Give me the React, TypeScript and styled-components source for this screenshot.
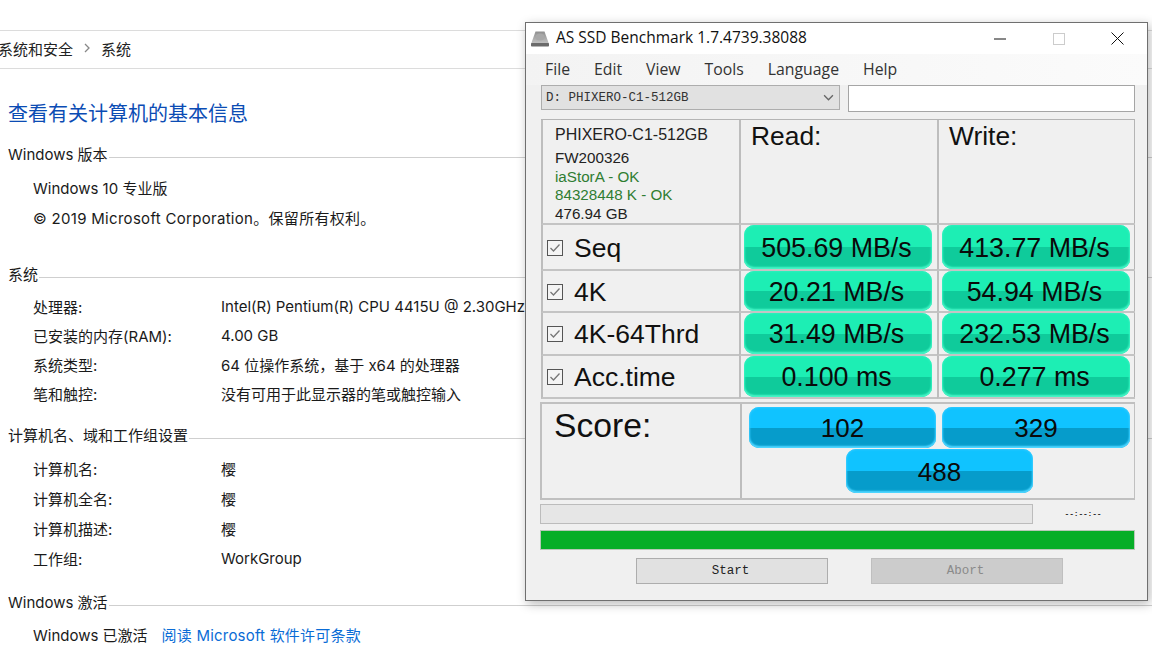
import React from 'react';
import styled, { createGlobalStyle } from 'styled-components';

const Global = createGlobalStyle`
  html, body { margin: 0; padding: 0; background: #fff; overflow: hidden; }
  body { width: 1152px; height: 646px; }
  * { box-sizing: border-box; }
`;

const pageFont = `Inter, "Noto Sans CJK SC", sans-serif`;
const uiFont = `"Open Sans", "Noto Sans CJK SC", sans-serif`;
const cellFont = `"Liberation Sans", Arial, sans-serif`;
const monoFont = `"Liberation Mono", "Courier New", monospace`;

const Page = styled.div`
  position: relative;
  width: 1152px;
  height: 646px;
  overflow: hidden;
  padding-top: 30px;
  font-family: ${pageFont};
  font-size: 15px;
  color: #1a1a1a;
`;

const Breadcrumb = styled.div`
  height: 39px;
  padding-bottom: 3px;
  border-top: 1px solid #dcdcdc;
  border-bottom: 1px solid #dcdcdc;
  display: flex;
  align-items: center;
  gap: 10px;
  margin-left: -2px;
  color: #222;
`;

const Title = styled.h1`
  margin: 30px 0 0 8px;
  height: 30px;
  line-height: 30px;
  font-size: 20px;
  font-weight: 400;
  color: #0b4cb4;
`;

const Section = styled.section<{ $top: number }>`
  margin-top: ${(p) => p.$top}px;
`;

const SectionHead = styled.div`
  display: flex;
  align-items: center;
  gap: 1px;
  margin: 0 0 8px 8px;
  height: 22px;
  white-space: nowrap;
  &::after {
    content: '';
    flex: 1;
    height: 1px;
    margin-top: 9px;
    background: #cfcfcf;
  }
`;

const InfoRow = styled.div<{ $h: number }>`
  display: flex;
  height: ${(p) => p.$h}px;
  align-items: center;
  padding-left: 33px;
  white-space: nowrap;
`;

const CopyrightRow = styled(InfoRow)`
  letter-spacing: 0.3px;
`;

const InfoLabel = styled.span`
  width: 188px;
  flex: none;
`;

const LinkText = styled.span`
  color: #0a6cd6;
  margin-left: 14px;
  letter-spacing: 0.2px;
`;

const Win = styled.div`
  position: absolute;
  left: 525px;
  top: 22px;
  width: 623px;
  height: 579px;
  background: #f0f0f0;
  border: 1px solid #6f6f6f;
  box-shadow: 2px 3px 10px rgba(0, 0, 0, 0.28);
  display: flex;
  flex-direction: column;
  font-family: ${uiFont};
`;

const TitleBar = styled.div`
  height: 31px;
  background: #fff;
  display: flex;
  align-items: center;
  padding-left: 4px;
  font-size: 15.500px;
  color: #111;
  flex: none;
`;

const TitleText = styled.span`
  flex: 1;
  margin: 0 0 3px 6px;
`;

const CaptionButton = styled.div`
  width: 59px;
  height: 31px;
  display: flex;
  align-items: center;
  justify-content: center;
`;

const MenuBar = styled.div`
  height: 31px;
  flex: none;
  display: flex;
  align-items: center;
  padding: 0 0 2px 19px;
  gap: 24px;
  font-size: 15.800px;
  color: #333;
  background: linear-gradient(90deg, #f3f3f3, #fbfbfb);
`;

const Body = styled.div`
  padding: 0 12px 0 14px;
  flex: 1;
`;

const DriveRow = styled.div`
  display: flex;
  gap: 8px;
  height: 27px;
  padding-left: 1px;
`;

const DriveSelect = styled.div`
  width: 299px;
  height: 25px;
  background: #e1e1e1;
  border: 1px solid #adadad;
  display: flex;
  align-items: center;
  justify-content: space-between;
  padding: 0 5px 0 4px;
  font-family: ${monoFont};
  font-size: 12.500px;
  color: #333;
`;

const DriveInput = styled.div`
  width: 288px;
  height: 27px;
  background: #fff;
  border: 1px solid #a5a5a5;
`;

const ResultGrid = styled.div`
  margin: 7px 0 0 1px;
  width: 594px;
  display: grid;
  grid-template-columns: 198px 198px 198px;
  grid-template-rows: 105px 46px 42px 43px 43px;
  border-top: 1px solid #b4b4b4;
  border-right: 1px solid #b4b4b4;
`;

const Cell = styled.div`
  border-left: 2px solid #bdbdbd;
  border-bottom: 2px solid #c4c4c4;
  min-width: 0;
  display: flex;
`;

const InfoCell = styled(Cell)`
  flex-direction: column;
  padding: 5px 0 0 12px;
  font-family: ${cellFont};
  font-size: 15.200px;
  line-height: 18.500px;
  color: #222;
  white-space: nowrap;
`;

const DriveName = styled.div`
  font-size: 16px;
  line-height: 20px;
  margin-bottom: 4px;
`;

const StatusLine = styled.div`
  color: #2f7d32;
`;

const HeadCell = styled(Cell)`
  font-family: ${cellFont};
  font-size: 26.400px;
  color: #111;
  padding: 1px 0 0 10px;
`;

const TestCell = styled(Cell)`
  align-items: center;
  padding: 2px 0 0 4px;
  gap: 10px;
  font-family: ${cellFont};
  font-size: 26.500px;
  color: #111;
  white-space: nowrap;
`;

const ValueCell = styled(Cell)`
  padding: 0 0 0 3px;
  align-items: stretch;
`;

const Pill = styled.div<{ $tone: 'green' | 'blue' }>`
  width: 188px;
  border-radius: 10px;
  display: flex;
  align-items: center;
  justify-content: center;
  padding: 2px 3px 0 0;
  font-family: ${cellFont};
  font-size: 26.800px;
  color: #0a0a0a;
  white-space: nowrap;
  box-shadow: inset 0 -2px 2px ${(p) => (p.$tone === 'green' ? '#46f5c6' : '#4fd6ff')},
    inset 0 0 2px 1px ${(p) => (p.$tone === 'green' ? '#2cf0bd' : '#2fc8ff')};
  background: ${(p) =>
    p.$tone === 'green'
      ? 'linear-gradient(#1deeb4 0 50%, #0fcb9b 50% 100%)'
      : 'linear-gradient(#10c3ff 0 50%, #069ccb 50% 100%)'};
`;

const ScoreBox = styled.div`
  margin-top: 3px;
  width: 595px;
  height: 98px;
  border: 2px solid #c0c0c0;
  border-right-width: 1px;
  display: grid;
  grid-template-columns: 200px 1fr;
`;

const ScoreLabel = styled.div`
  border-right: 2px solid #bdbdbd;
  font-family: ${cellFont};
  font-size: 33.700px;
  padding: 2px 0 0 12px;
  color: #111;
`;

const ScorePills = styled.div`
  display: grid;
  grid-template-columns: 187px 188px;
  grid-auto-rows: 42px;
  column-gap: 6px;
  padding: 3px 0 0 7px;
`;

const ScorePill = styled(Pill)`
  width: auto;
  height: 41px;
  padding: 2px 0 0 0;
  font-size: 26px;
`;

const TotalPill = styled(ScorePill)`
  grid-column: 1 / 3;
  justify-self: center;
  width: 187px;
  height: 44px;
`;

const ProgressRow = styled.div`
  display: flex;
  align-items: center;
  margin-top: 3px;
  height: 21px;
`;

const Track = styled.div`
  width: 493px;
  height: 20px;
  background: #e6e6e6;
  border: 1px solid #bcbcbc;
`;

const Timer = styled.div`
  width: 100px;
  text-align: center;
  font-family: ${monoFont};
  font-size: 8px;
  letter-spacing: -0.200px;
  font-weight: 700;
  color: #222;
`;

const DoneBar = styled.div`
  margin-top: 6px;
  width: 595px;
  height: 20px;
  background: #06ae27;
  border: 1px solid #b8c8b8;
`;

const ButtonRow = styled.div`
  display: flex;
  gap: 43px;
  margin: 8px 0 0 96px;
`;

const ActionButton = styled.div<{ $disabled?: boolean }>`
  width: 192px;
  height: 26px;
  display: flex;
  align-items: center;
  justify-content: center;
  padding-right: 3px;
  font-family: ${monoFont};
  font-size: 12.500px;
  background: ${(p) => (p.$disabled ? '#cccccc' : '#e1e1e1')};
  border: 1px solid ${(p) => (p.$disabled ? '#bfbfbf' : '#adadad')};
  color: ${(p) => (p.$disabled ? '#8a8a8a' : '#222')};
`;

const DriveIcon = () => (
  <svg width="20" height="18" viewBox="0 0 20 18">
    <defs>
      <linearGradient id="driveTop" x1="0" y1="0" x2="0" y2="1">
        <stop offset="0" stopColor="#8f8f8f" />
        <stop offset="1" stopColor="#c4c4c4" />
      </linearGradient>
    </defs>
    <path d="M5.500 1.500h9l4.500 12.500h-18z" fill="url(#driveTop)" />
    <ellipse cx="10" cy="7" rx="4.500" ry="3.500" fill="#a8a8a8" />
    <rect x="1" y="13" width="18" height="3.500" rx="0.800" fill="#6a6a6a" />
  </svg>
);

const Check = () => (
  <svg width="17" height="17" viewBox="0 0 17 17">
    <rect x="0.500" y="0.500" width="15" height="15" fill="#f4f4f4" stroke="#555" />
    <path d="M3.500 8l3 3 6-6.500" fill="none" stroke="#777" strokeWidth="1.300" />
  </svg>
);

const Chevron = ({ size, color }: { size: number; color: string }) => (
  <svg width={size} height={size} viewBox="0 0 10 10">
    <path d="M1 3l4 4 4-4" fill="none" stroke={color} strokeWidth="1.200" />
  </svg>
);

const tests = [
  { name: 'Seq', read: '505.69 MB/s', write: '413.77 MB/s' },
  { name: '4K', read: '20.21 MB/s', write: '54.94 MB/s' },
  { name: '4K-64Thrd', read: '31.49 MB/s', write: '232.53 MB/s' },
  { name: 'Acc.time', read: '0.100 ms', write: '0.277 ms' },
];

const App = () => (
  <Page>
    <Global />
    <Breadcrumb>
      <span>系统和安全</span>
      <svg width="8" height="10" viewBox="0 0 8 10">
        <path d="M2 1l4 4-4 4" fill="none" stroke="#888" strokeWidth="1.300" />
      </svg>
      <span>系统</span>
    </Breadcrumb>
    <Title>查看有关计算机的基本信息</Title>
    <Section $top={13}>
      <SectionHead>Windows 版本</SectionHead>
      <InfoRow $h={30}>Windows 10 专业版</InfoRow>
      <CopyrightRow $h={30}>© 2019 Microsoft Corporation。保留所有权利。</CopyrightRow>
    </Section>
    <Section $top={30}>
      <SectionHead>系统</SectionHead>
      <InfoRow $h={29}>
        <InfoLabel>处理器:</InfoLabel>Intel(R) Pentium(R) CPU 4415U @ 2.30GHz
      </InfoRow>
      <InfoRow $h={29}>
        <InfoLabel>已安装的内存(RAM):</InfoLabel>4.00 GB
      </InfoRow>
      <InfoRow $h={29}>
        <InfoLabel>系统类型:</InfoLabel>64 位操作系统，基于 x64 的处理器
      </InfoRow>
      <InfoRow $h={29}>
        <InfoLabel>笔和触控:</InfoLabel>没有可用于此显示器的笔或触控输入
      </InfoRow>
    </Section>
    <Section $top={15}>
      <SectionHead>计算机名、域和工作组设置</SectionHead>
      <InfoRow $h={30}>
        <InfoLabel>计算机名:</InfoLabel>樱
      </InfoRow>
      <InfoRow $h={30}>
        <InfoLabel>计算机全名:</InfoLabel>樱
      </InfoRow>
      <InfoRow $h={30}>
        <InfoLabel>计算机描述:</InfoLabel>樱
      </InfoRow>
      <InfoRow $h={30}>
        <InfoLabel>工作组:</InfoLabel>WorkGroup
      </InfoRow>
    </Section>
    <Section $top={17}>
      <SectionHead>Windows 激活</SectionHead>
      <InfoRow $h={28}>
        Windows 已激活<LinkText>阅读 Microsoft 软件许可条款</LinkText>
      </InfoRow>
    </Section>

    <Win>
      <TitleBar>
        <DriveIcon />
        <TitleText>AS SSD Benchmark 1.7.4739.38088</TitleText>
        <CaptionButton>
          <svg width="12" height="12" viewBox="0 0 12 12">
            <path d="M0 6h12" stroke="#111" />
          </svg>
        </CaptionButton>
        <CaptionButton>
          <svg width="12" height="12" viewBox="0 0 12 12">
            <rect x="0.500" y="0.500" width="11" height="11" fill="none" stroke="#ccc" />
          </svg>
        </CaptionButton>
        <CaptionButton>
          <svg width="13" height="13" viewBox="0 0 13 13">
            <path d="M0.500 0.500l12 12M12.500 0.500l-12 12" stroke="#111" />
          </svg>
        </CaptionButton>
      </TitleBar>
      <MenuBar>
        <span>File</span>
        <span>Edit</span>
        <span>View</span>
        <span>Tools</span>
        <span>Language</span>
        <span>Help</span>
      </MenuBar>
      <Body>
        <DriveRow>
          <DriveSelect>
            <span>D: PHIXERO-C1-512GB</span>
            <Chevron size={11} color="#666" />
          </DriveSelect>
          <DriveInput />
        </DriveRow>
        <ResultGrid>
          <InfoCell>
            <DriveName>PHIXERO-C1-512GB</DriveName>
            <div>FW200326</div>
            <StatusLine>iaStorA - OK</StatusLine>
            <StatusLine>84328448 K - OK</StatusLine>
            <div>476.94 GB</div>
          </InfoCell>
          <HeadCell>Read:</HeadCell>
          <HeadCell>Write:</HeadCell>
          {tests.map((t) => (
            <React.Fragment key={t.name}>
              <TestCell>
                <Check />
                {t.name}
              </TestCell>
              <ValueCell>
                <Pill $tone="green">{t.read}</Pill>
              </ValueCell>
              <ValueCell>
                <Pill $tone="green">{t.write}</Pill>
              </ValueCell>
            </React.Fragment>
          ))}
        </ResultGrid>
        <ScoreBox>
          <ScoreLabel>Score:</ScoreLabel>
          <ScorePills>
            <ScorePill $tone="blue">102</ScorePill>
            <ScorePill $tone="blue">329</ScorePill>
            <TotalPill $tone="blue">488</TotalPill>
          </ScorePills>
        </ScoreBox>
        <ProgressRow>
          <Track />
          <Timer>--:--:--</Timer>
        </ProgressRow>
        <DoneBar />
        <ButtonRow>
          <ActionButton>Start</ActionButton>
          <ActionButton $disabled>Abort</ActionButton>
        </ButtonRow>
      </Body>
    </Win>
  </Page>
);

export default App;
